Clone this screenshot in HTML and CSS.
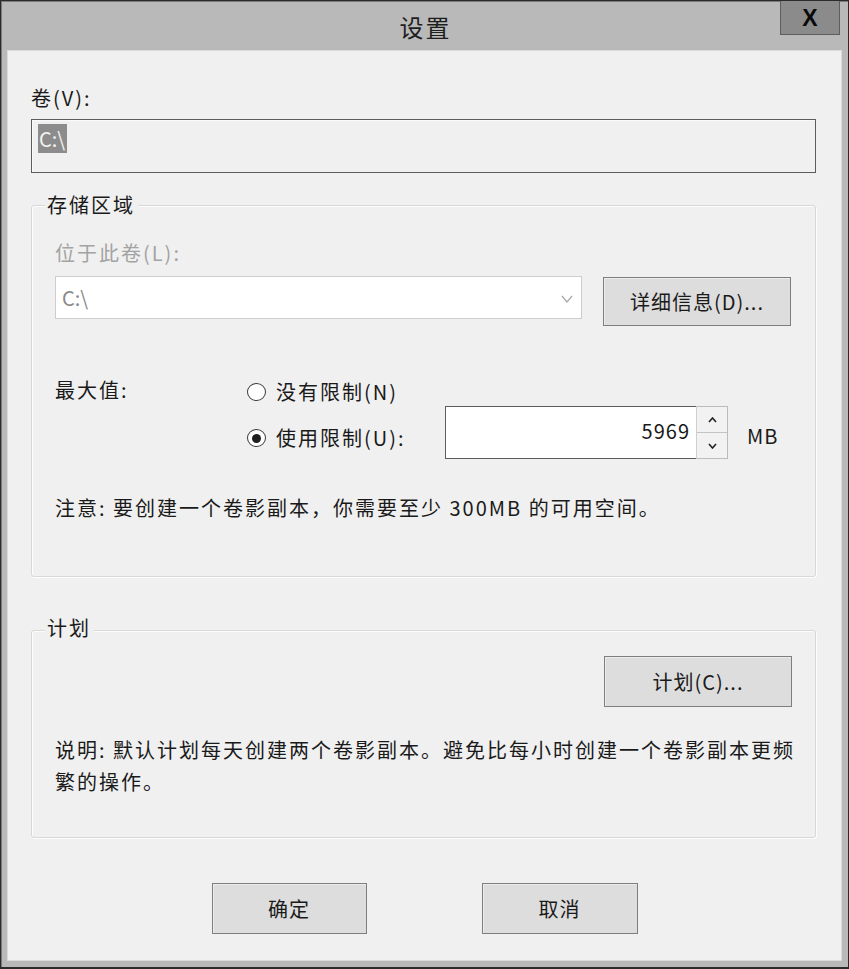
FILE: index.html
```html
<!DOCTYPE html>
<html lang="zh-CN">
<head>
<meta charset="utf-8">
<title>设置</title>
<link rel="stylesheet" href="styles.css">
</head>
<body>
<div class="window">
  <div class="titlebar">
    <span class="title">设置</span>
    <button class="close" type="button">X</button>
  </div>
  <div class="client">
    <div class="label">卷(V):</div>
    <div class="volume"><span class="sel">C:\</span></div>

    <div class="group group-storage">
      <div class="group-title">存储区域</div>
      <div class="label disabled">位于此卷(L):</div>
      <div class="combo-row">
        <div class="combo">
          <span class="combo-text">C:\</span>
          <svg class="chev" width="12" height="8" viewBox="0 0 12 8"><polyline points="1,1 6,7 11,1" fill="none" stroke="#a8a8a8" stroke-width="1.2"/></svg>
        </div>
        <button class="btn btn-side" type="button">详细信息(D)...</button>
      </div>
      <div class="limit">
        <div class="limit-label">最大值:</div>
        <div class="limit-options">
          <div class="option opt1"><span class="radio"></span><span class="opt-text">没有限制(N)</span></div>
          <div class="option opt2">
            <span class="radio-wrap"><span class="radio checked"></span><span class="opt-text">使用限制(U):</span></span>
            <div class="spin">
              <div class="spin-field">5969</div>
              <div class="spin-btns">
                <div class="spin-btn">
                  <svg width="9" height="6" viewBox="0 0 9 6"><polyline points="1,5 4.5,1 8,5" fill="none" stroke="#222" stroke-width="1.6"/></svg>
                </div>
                <div class="spin-btn">
                  <svg width="9" height="6" viewBox="0 0 9 6"><polyline points="1,1 4.5,5 8,1" fill="none" stroke="#222" stroke-width="1.6"/></svg>
                </div>
              </div>
            </div>
            <span class="unit">MB</span>
          </div>
        </div>
      </div>
      <div class="note">注意: 要创建一个卷影副本，你需要至少 300MB 的可用空间。</div>
    </div>

    <div class="group group-schedule">
      <div class="group-title">计划</div>
      <div class="schedule-row">
        <button class="btn btn-side btn-schedule" type="button">计划(C)...</button>
      </div>
      <p class="desc">说明: 默认计划每天创建两个卷影副本。避免比每小时创建一个卷影副本更频<br>繁的操作。</p>
    </div>

    <div class="actions">
      <button class="btn btn-action" type="button">确定</button>
      <button class="btn btn-action btn-cancel" type="button">取消</button>
    </div>
  </div>
</div>
</body>
</html>
```

FILE: styles.css
```css
* { box-sizing: border-box; }

html, body {
  margin: 0;
  padding: 0;
  background: #b9b9b9;
}

body {
  font-family: "Noto Sans CJK SC", "Noto Sans", sans-serif;
  font-size: 20px;
  color: #1a1a1a;
  letter-spacing: 2px;
}

.window {
  width: 849px;
  height: 969px;
  border: 1px solid #2c2c2c;
  border-bottom-width: 2px;
  background: #b9b9b9;
  padding: 0 6px 6px 6px;
  display: flex;
  flex-direction: column;
  position: relative;
  box-shadow: inset 1px 1px 0 #7a7a7a;
}

.titlebar {
  height: 49px;
  display: flex;
  align-items: center;
  justify-content: center;
  flex-shrink: 0;
}

.title {
  font-size: 24px;
  letter-spacing: 2px;
  color: #1e1e1e;
  margin-left: 2px;
  margin-top: 1px;
}

.close {
  position: absolute;
  top: 0;
  right: 8px;
  width: 60px;
  height: 34px;
  background: #8b8b8b;
  border: 1px solid #5d5d5d;
  border-top: none;
  color: #0a0a0a;
  font-family: "Liberation Sans", sans-serif;
  font-weight: bold;
  font-size: 23px;
  letter-spacing: 0;
  padding: 0;
  line-height: 30px;
}

.client {
  flex: 1;
  background: #f0f0f0;
  border: 1px solid #dadada;
  padding: 35px 25px 0 23px;
}

.label {
  line-height: 24px;
  height: 24px;
}

.disabled { color: #a3a3a3; }

.volume {
  margin-top: 9px;
  height: 54px;
  border: 1px solid #5c5c5c;
  box-shadow: inset 1px 1px 0 #fafafa;
  background: #f0f0f0;
  padding: 4px 0 0 6px;
}

.sel {
  display: inline-block;
  background: #8c8c8c;
  color: #f2f2f2;
  height: 29px;
  line-height: 29px;
  padding: 0 2px 0 1px;
  letter-spacing: 0;
}

.group {
  position: relative;
  border: 1px solid #d8d8d8;
  border-radius: 3px;
  box-shadow: inset 1px 1px 0 #fdfdfd, 1px 1px 0 #fdfdfd;
  padding: 0 23px;
}

.group-title {
  position: absolute;
  top: -13px;
  left: 13px;
  padding: 0 3px 0 2px;
  background: #f0f0f0;
  line-height: 24px;
}

.group-storage {
  margin-top: 32px;
  padding-top: 35px;
  padding-bottom: 56px;
}

.group-schedule .group-title { top: -15px; }

.combo-row {
  margin-top: 11px;
  display: flex;
  align-items: flex-start;
  gap: 21px;
}

.combo {
  width: 527px;
  height: 43px;
  background: #ffffff;
  border: 1px solid #cdcdcd;
  display: flex;
  align-items: center;
  justify-content: space-between;
  padding: 0 8px 0 6px;
}

.combo-text {
  color: #8a8a8a;
  letter-spacing: 0;
}

.chev { margin-top: 2px; }

.btn {
  font-family: inherit;
  font-size: 20px;
  letter-spacing: 1px;
  color: #1a1a1a;
  background: #dddddd;
  border: 1px solid #7e7e7e;
  box-shadow: inset 1px 1px 0 #ececec;
  padding: 0;
}

.btn-side {
  width: 188px;
  height: 49px;
  margin-top: 1px;
}

.limit {
  margin-top: 52px;
  display: flex;
}

.limit-label {
  width: 192px;
  line-height: 24px;
}

.limit-options {
  display: flex;
  flex-direction: column;
  gap: 2px;
}

.option {
  display: flex;
  align-items: center;
}

.opt1 {
  margin-top: 2px;
  height: 24px;
}

.opt2 {
  align-items: flex-start;
  height: 53px;
}

.radio {
  width: 19px;
  height: 18px;
  border: 1px solid #3a3a3a;
  border-radius: 50%;
  background: #ffffff;
  display: inline-flex;
  align-items: center;
  justify-content: center;
  flex-shrink: 0;
}

.radio.checked::after {
  content: "";
  width: 9px;
  height: 9px;
  border-radius: 50%;
  background: #1e1e1e;
}

.opt-text {
  margin-left: 10px;
  line-height: 24px;
}

.radio-wrap {
  display: flex;
  align-items: center;
  width: 198px;
  margin-top: 20px;
}

.spin {
  display: flex;
  height: 53px;
}

.spin-field {
  width: 251px;
  height: 53px;
  background: #ffffff;
  border: 1px solid #5c5c5c;
  border-right: none;
  text-align: right;
  padding-right: 6px;
  line-height: 48px;
  letter-spacing: 1px;
}

.spin-btns {
  width: 32px;
  display: flex;
  flex-direction: column;
  border: 1px solid #bcbcbc;
  border-left: 1px solid #cfcfcf;
  background: #f2f2f2;
}

.spin-btn {
  flex: 1;
  display: flex;
  align-items: center;
  justify-content: center;
}

.spin-btn + .spin-btn {
  border-top: 1px solid #c4c4c4;
}

.unit {
  margin-left: 19px;
  margin-top: 18px;
  line-height: 24px;
  letter-spacing: 1px;
}

.note {
  margin-top: 37px;
  line-height: 24px;
}

.group-schedule {
  margin-top: 53px;
  padding-top: 25px;
  padding-bottom: 39px;
}

.schedule-row {
  display: flex;
  justify-content: flex-end;
}

.btn-schedule {
  height: 51px;
  margin-top: 0;
}

.desc {
  margin: 27px -20px 0 0;
  line-height: 32px;
  white-space: nowrap;
}

.actions {
  margin-top: 45px;
  display: flex;
  justify-content: center;
  gap: 115px;
  padding-left: 2px;
}

.btn-action {
  width: 155px;
  height: 51px;
}

.btn-cancel { width: 156px; }
```
